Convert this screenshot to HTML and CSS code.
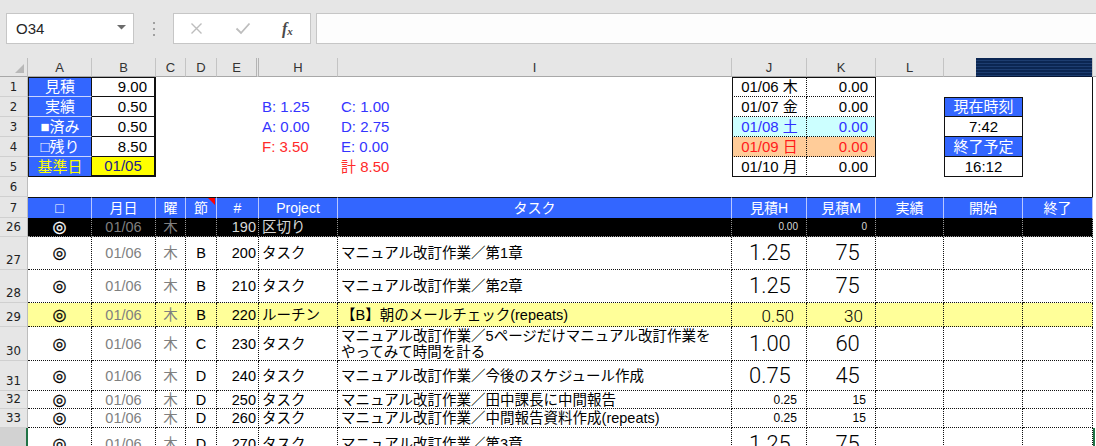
FILE: index.html
```html
<!DOCTYPE html>
<html lang="ja">
<head>
<meta charset="utf-8">
<title>Sheet</title>
<link rel="stylesheet" href="styles.css">
</head>
<body>
<div class="app">
  <div class="fbar">
    <div class="namebox"><span>O34</span><svg class="dd" width="9" height="5" viewBox="0 0 9 5"><polygon points="0,0 9,0 4.5,4.5" fill="#6b6b6b"/></svg></div>
    <div class="grip"><i></i><i></i><i></i></div>
    <div class="fbtns">
      <svg class="ic-x" width="13" height="13" viewBox="0 0 13 13"><path d="M1.5 1.5 L11.5 11.5 M11.5 1.5 L1.5 11.5" stroke="#bdbdbd" stroke-width="1.4" fill="none"/></svg>
      <svg class="ic-ok" width="16" height="13" viewBox="0 0 16 13"><path d="M1.5 6.5 L6 11 L14.5 1.5" stroke="#bdbdbd" stroke-width="1.8" fill="none"/></svg>
      <span class="fx">f<span class="fxs">x</span></span>
    </div>
    <div class="finput"></div>
  </div>

  <div class="sheet">
    <div class="row chdr">
      <div class="rh corner"><svg width="9" height="9" viewBox="0 0 9 9"><polygon points="9,0 9,9 0,9" fill="#b8b8b8"/></svg></div>
      <div class="ch">A</div><div class="ch">B</div><div class="ch">C</div><div class="ch">D</div><div class="ch ehdr">E</div><div class="ch">H</div><div class="ch">I</div><div class="ch">J</div><div class="ch">K</div><div class="ch">L</div><div class="ch">M</div><div class="ch">N</div><div class="ch chlast"></div>
    </div>

    <div class="row h20">
      <div class="rh">1</div>
      <div class="c lab first">見積</div>
      <div class="c val first">9.00</div>
      <div class="c"></div><div class="c"></div><div class="c"></div><div class="c"></div><div class="c"></div>
      <div class="c jd first">01/06 木</div>
      <div class="c kd first">0.00</div>
      <div class="c"></div><div class="c"></div>
      <div class="c nr"></div><div class="c"></div>
    </div>

    <div class="row h20">
      <div class="rh">2</div>
      <div class="c lab">実績</div>
      <div class="c val">0.50</div>
      <div class="c"></div><div class="c"></div><div class="c"></div>
      <div class="c sm blue">B: 1.25</div>
      <div class="c sm blue">C: 1.00</div>
      <div class="c jd">01/07 金</div>
      <div class="c kd">0.00</div>
      <div class="c"></div>
      <div class="c mh first">現在時刻</div>
      <div class="c nr"></div><div class="c"></div>
    </div>

    <div class="row h20">
      <div class="rh">3</div>
      <div class="c lab">■済み</div>
      <div class="c val">0.50</div>
      <div class="c"></div><div class="c"></div><div class="c"></div>
      <div class="c sm blue">A: 0.00</div>
      <div class="c sm blue">D: 2.75</div>
      <div class="c jd sat">01/08 土</div>
      <div class="c kd sat">0.00</div>
      <div class="c"></div>
      <div class="c mv">7:42</div>
      <div class="c nr"></div><div class="c"></div>
    </div>

    <div class="row h20">
      <div class="rh">4</div>
      <div class="c lab">□残り</div>
      <div class="c val">8.50</div>
      <div class="c"></div><div class="c"></div><div class="c"></div>
      <div class="c sm red">F: 3.50</div>
      <div class="c sm blue">E: 0.00</div>
      <div class="c jd sun">01/09 日</div>
      <div class="c kd sun">0.00</div>
      <div class="c"></div>
      <div class="c mh">終了予定</div>
      <div class="c nr"></div><div class="c"></div>
    </div>

    <div class="row h20">
      <div class="rh">5</div>
      <div class="c lab last yl">基準日</div>
      <div class="c val date">01/05</div>
      <div class="c"></div><div class="c"></div><div class="c"></div>
      <div class="c"></div>
      <div class="c sm red">計 8.50</div>
      <div class="c jd last">01/10 月</div>
      <div class="c kd last">0.00</div>
      <div class="c"></div>
      <div class="c mv">16:12</div>
      <div class="c nr"></div><div class="c"></div>
    </div>

    <div class="row h20">
      <div class="rh">6</div>
      <div class="c"></div><div class="c"></div><div class="c"></div><div class="c"></div><div class="c"></div><div class="c"></div><div class="c"></div><div class="c"></div><div class="c"></div><div class="c"></div><div class="c"></div>
      <div class="c nr"></div><div class="c"></div>
    </div>

    <div class="row h21">
      <div class="rh">7</div>
      <div class="c hc">□</div>
      <div class="c hc">月日</div>
      <div class="c hc">曜</div>
      <div class="c hc note">節</div>
      <div class="c hc">#</div>
      <div class="c hc">Project</div>
      <div class="c hc">タスク</div>
      <div class="c hc">見積H</div>
      <div class="c hc">見積M</div>
      <div class="c hc">実績</div>
      <div class="c hc">開始</div>
      <div class="c hc">終了</div>
      <div class="c"></div>
    </div>

    <div class="row h19 sep">
      <div class="rh">26</div>
      <div class="c t ctr mk wh">◎</div>
      <div class="c t ctr gr">01/06</div>
      <div class="c t ctr gr">木</div>
      <div class="c t ctr"></div>
      <div class="c t num lt">190</div>
      <div class="c t lft lt">区切り</div>
      <div class="c t lft"></div>
      <div class="c t jk tiny lt">0.00</div>
      <div class="c t jk tiny lt">0</div>
      <div class="c t"></div><div class="c t"></div><div class="c t"></div>
      <div class="c o"></div>
    </div>

    <div class="row h33">
      <div class="rh">27</div>
      <div class="c t ctr mk">◎</div>
      <div class="c t ctr gr">01/06</div>
      <div class="c t ctr gr">木</div>
      <div class="c t ctr">B</div>
      <div class="c t num">200</div>
      <div class="c t lft">タスク</div>
      <div class="c t lft">マニュアル改訂作業／第1章</div>
      <div class="c t jk big">1.25</div>
      <div class="c t jk big">75</div>
      <div class="c t"></div><div class="c t"></div><div class="c t"></div>
      <div class="c o"></div>
    </div>

    <div class="row h33">
      <div class="rh">28</div>
      <div class="c t ctr mk">◎</div>
      <div class="c t ctr gr">01/06</div>
      <div class="c t ctr gr">木</div>
      <div class="c t ctr">B</div>
      <div class="c t num">210</div>
      <div class="c t lft">タスク</div>
      <div class="c t lft">マニュアル改訂作業／第2章</div>
      <div class="c t jk big">1.25</div>
      <div class="c t jk big">75</div>
      <div class="c t"></div><div class="c t"></div><div class="c t"></div>
      <div class="c o"></div>
    </div>

    <div class="row h24 hl">
      <div class="rh">29</div>
      <div class="c t ctr mk">◎</div>
      <div class="c t ctr gr">01/06</div>
      <div class="c t ctr gr">木</div>
      <div class="c t ctr">B</div>
      <div class="c t num">220</div>
      <div class="c t lft">ルーチン</div>
      <div class="c t lft">【B】朝のメールチェック(repeats)</div>
      <div class="c t jk mid">0.50</div>
      <div class="c t jk mid">30</div>
      <div class="c t"></div><div class="c t"></div><div class="c t"></div>
      <div class="c o"></div>
    </div>

    <div class="row h34">
      <div class="rh">30</div>
      <div class="c t ctr mk">◎</div>
      <div class="c t ctr gr">01/06</div>
      <div class="c t ctr gr">木</div>
      <div class="c t ctr">C</div>
      <div class="c t num">230</div>
      <div class="c t lft">タスク</div>
      <div class="c t lft wrap">マニュアル改訂作業／5ページだけマニュアル改訂作業を<br>やってみて時間を計る</div>
      <div class="c t jk big">1.00</div>
      <div class="c t jk big">60</div>
      <div class="c t"></div><div class="c t"></div><div class="c t"></div>
      <div class="c o"></div>
    </div>

    <div class="row h30">
      <div class="rh">31</div>
      <div class="c t ctr mk">◎</div>
      <div class="c t ctr gr">01/06</div>
      <div class="c t ctr gr">木</div>
      <div class="c t ctr">D</div>
      <div class="c t num">240</div>
      <div class="c t lft">タスク</div>
      <div class="c t lft">マニュアル改訂作業／今後のスケジュール作成</div>
      <div class="c t jk big">0.75</div>
      <div class="c t jk big">45</div>
      <div class="c t"></div><div class="c t"></div><div class="c t"></div>
      <div class="c o"></div>
    </div>

    <div class="row h18">
      <div class="rh">32</div>
      <div class="c t ctr mk">◎</div>
      <div class="c t ctr gr">01/06</div>
      <div class="c t ctr gr">木</div>
      <div class="c t ctr">D</div>
      <div class="c t num">250</div>
      <div class="c t lft">タスク</div>
      <div class="c t lft">マニュアル改訂作業／田中課長に中間報告</div>
      <div class="c t jk small">0.25</div>
      <div class="c t jk small">15</div>
      <div class="c t"></div><div class="c t"></div><div class="c t"></div>
      <div class="c o"></div>
    </div>

    <div class="row h19">
      <div class="rh">33</div>
      <div class="c t ctr mk">◎</div>
      <div class="c t ctr gr">01/06</div>
      <div class="c t ctr gr">木</div>
      <div class="c t ctr">D</div>
      <div class="c t num">260</div>
      <div class="c t lft">タスク</div>
      <div class="c t lft">マニュアル改訂作業／中間報告資料作成(repeats)</div>
      <div class="c t jk small">0.25</div>
      <div class="c t jk small">15</div>
      <div class="c t"></div><div class="c t"></div><div class="c t"></div>
      <div class="c o"></div>
    </div>

    <div class="row h33">
      <div class="rh sel">34</div>
      <div class="c t ctr mk">◎</div>
      <div class="c t ctr gr">01/06</div>
      <div class="c t ctr gr">木</div>
      <div class="c t ctr">D</div>
      <div class="c t num">270</div>
      <div class="c t lft">タスク</div>
      <div class="c t lft">マニュアル改訂作業／第3章</div>
      <div class="c t jk big">1.25</div>
      <div class="c t jk big">75</div>
      <div class="c t"></div><div class="c t"></div><div class="c t"></div>
      <div class="c o active"></div>
    </div>
  </div>

  <div class="navy"></div>
</div>
</body>
</html>
```

FILE: styles.css
```css
html, body {
  margin: 0;
  padding: 0;
  background: #fff;
}
body {
  width: 1096px;
  height: 446px;
  overflow: hidden;
  font-family: "Liberation Sans", "Noto Sans CJK JP", sans-serif;
  color: #000;
}
.app {
  position: relative;
  width: 1096px;
  height: 446px;
  overflow: hidden;
}

/* formula bar */
.fbar {
  height: 58px;
  box-sizing: border-box;
  padding-top: 13px;
  background: #e6e6e6;
  display: flex;
  align-items: flex-start;
}
.namebox {
  margin-left: 6px;
  width: 128px;
  height: 31px;
  box-sizing: border-box;
  background: #fff;
  border: 1px solid #c6c6c6;
  display: flex;
  align-items: center;
  justify-content: space-between;
  padding: 0 7px 0 9px;
  font-size: 15px;
  color: #262626;
}
.namebox .dd { margin-top: -2px; }
.grip {
  width: 39px;
  height: 31px;
  display: flex;
  flex-direction: column;
  align-items: center;
  justify-content: center;
  gap: 4px;
}
.grip i {
  display: block;
  width: 2px;
  height: 2px;
  background: #a0a0a0;
}
.fbtns {
  width: 138px;
  height: 31px;
  box-sizing: border-box;
  background: #fff;
  border: 1px solid #c6c6c6;
  display: flex;
  align-items: center;
  padding-left: 16px;
}
.ic-ok { margin-left: 32px; }
.fx {
  margin-left: 31px;
  font-family: "Liberation Serif", serif;
  font-style: italic;
  font-weight: bold;
  font-size: 16px;
  color: #4a4a4a;
  line-height: 1;
}
.fxs {
  font-size: 11px;
  vertical-align: -1px;
}
.finput {
  flex: 1;
  margin-left: 5px;
  height: 31px;
  box-sizing: border-box;
  background: #fdfdfd;
  border: 1px solid #c6c6c6;
  border-right: 0;
}

/* sheet grid */
.sheet { display: flex; flex-direction: column; }
.row {
  display: grid;
  grid-template-columns: 28px 64px 64px 30px 31px 42px 79px 394px 75px 69px 68px 79px 70px 3px;
}
.row > div { box-sizing: border-box; min-width: 0; }
.h18 { height: 18px; }
.h19 { height: 19px; }
.h20 { height: 20px; }
.h21 { height: 21px; }
.h24 { height: 24px; }
.h30 { height: 30px; }
.h33 { height: 33px; }
.h34 { height: 34px; }

.chdr {
  height: 19px;
  background: #e6e6e6;
}
.ch {
  border-right: 1px solid #c4c4c4;
  border-bottom: 1px solid #a8a8a8;
  display: flex;
  align-items: center;
  justify-content: center;
  font-size: 13px;
  color: #333;
  padding-top: 1px;
}
.ch.ehdr { border-right: 3px double #b4b4b4; }
.ch.chlast { border-right: 0; }
.corner {
  justify-content: flex-end !important;
  align-items: flex-end !important;
  padding: 0 3px 3px 0 !important;
  border-bottom: 1px solid #a8a8a8 !important;
}

.rh {
  background: #e6e6e6;
  border-right: 1px solid #bdbdbd;
  border-bottom: 1px solid #d0d0d0;
  display: flex;
  justify-content: center;
  align-items: flex-end;
  padding-bottom: 2px;
  font-family: "DejaVu Sans Condensed", "Liberation Sans", sans-serif;
  font-stretch: condensed;
  font-size: 13px;
  line-height: 14px;
  color: #222;
}
.rh.sel {
  background: #d2d2d2;
  border-right: 2px solid #217346;
}

.c {
  display: flex;
  align-items: center;
  overflow: hidden;
  white-space: nowrap;
  font-size: 14.5px;
  line-height: 16px;
}

/* top blocks */
.lab {
  background: #3366ff;
  color: #fff;
  justify-content: center;
  font-size: 15px;
  border-left: 1px solid #1a1a1a;
  border-right: 1px solid #111;
  border-bottom: 1px solid #c9d4ff;
}
.lab.last { border-bottom: 1px solid #111; }
.lab.yl { color: #ffff00; }
.val {
  justify-content: flex-end;
  padding-right: 7px;
  font-size: 15px;
  border-right: 2px solid #111;
  border-bottom: 1px solid #111;
}
.val.date {
  background: #ffff00;
  justify-content: center;
  padding-right: 0;
  color: #20208c;
  border-bottom: 2px solid #111;
}
.first { border-top: 1px solid #111; }
.sm {
  font-size: 15px;
  padding-left: 3px;
}
.blue { color: #3434ff; }
.red { color: #ff2a2a; }
.jd {
  justify-content: center;
  font-size: 15px;
  border-left: 1px solid #111;
  border-right: 1px dotted #111;
  border-bottom: 1px dotted #111;
}
.kd {
  justify-content: flex-end;
  padding-right: 7px;
  font-size: 15px;
  border-right: 1px solid #111;
  border-bottom: 1px dotted #111;
}
.jd.last, .kd.last { border-bottom: 1px solid #111; }
.sat { background: #ccffff; color: #2f2fff; }
.sun { background: #ffcc99; color: #ff1a1a; }
.mh {
  background: #3366ff;
  color: #fff;
  justify-content: center;
  font-size: 15px;
  border: 1px solid #111;
  border-top: 0;
}
.mh.first { border-top: 1px solid #111; }
.mv {
  justify-content: center;
  font-size: 15px;
  border: 1px solid #111;
  border-top: 0;
}
.nr { border-right: 1px solid #111; }

/* header row 7 */
.hc {
  background: #3366ff;
  color: #fff;
  justify-content: center;
  font-size: 14px;
  border-top: 1px solid #111;
  border-right: 1px solid #b9c7ff;
}
.note { position: relative; }
.note::after {
  content: "";
  position: absolute;
  top: 0;
  right: 1px;
  border-top: 7px solid #ff0000;
  border-left: 7px solid transparent;
}

/* task rows */
.t {
  border-right: 1px dotted #111;
  border-bottom: 1px dotted #111;
}
.ctr { justify-content: center; }
.lft { padding-left: 3px; }
.num { justify-content: flex-end; padding-right: 2px; }
.gr { color: #7f7f7f; }
.mk {
  font-family: "DejaVu Sans", sans-serif;
  font-size: 16px;
  line-height: 14px;
  -webkit-text-stroke: 0.3px currentColor;
}
.wrap { white-space: normal; line-height: 16px; font-size: 14.5px; }
.jk {
  justify-content: flex-end;
  padding-right: calc(0.6em + 2px);
}
.big {
  font-family: "Roboto", "Liberation Sans", sans-serif;
  font-weight: 300;
  font-size: 22px;
  line-height: 24px;
}
.mid {
  font-family: "Roboto", "Liberation Sans", sans-serif;
  font-weight: 300;
  font-size: 17px;
  padding-top: 3px;
}
.small { font-size: 12px; }
.tiny { font-size: 10px; }

.sep > .c { background: #000; }
.sep > .t { border-color: #9a9a9a; }
.sep > .o { background: #fff; }
.wh { color: #fff; }
.lt { color: #d8d8d8; }

.hl > .t { background: #ffff99; }
.o.active { border-left: 2px solid #217346; }

/* floating dark shape over column header */
.navy {
  position: absolute;
  left: 976px;
  top: 58px;
  width: 116px;
  height: 19px;
  background: repeating-linear-gradient(to bottom, #0b2652 0px, #0b2652 2px, #1d3d70 2px, #1d3d70 3px);
  border-bottom: 1px solid #061634;
  box-sizing: border-box;
}
```
